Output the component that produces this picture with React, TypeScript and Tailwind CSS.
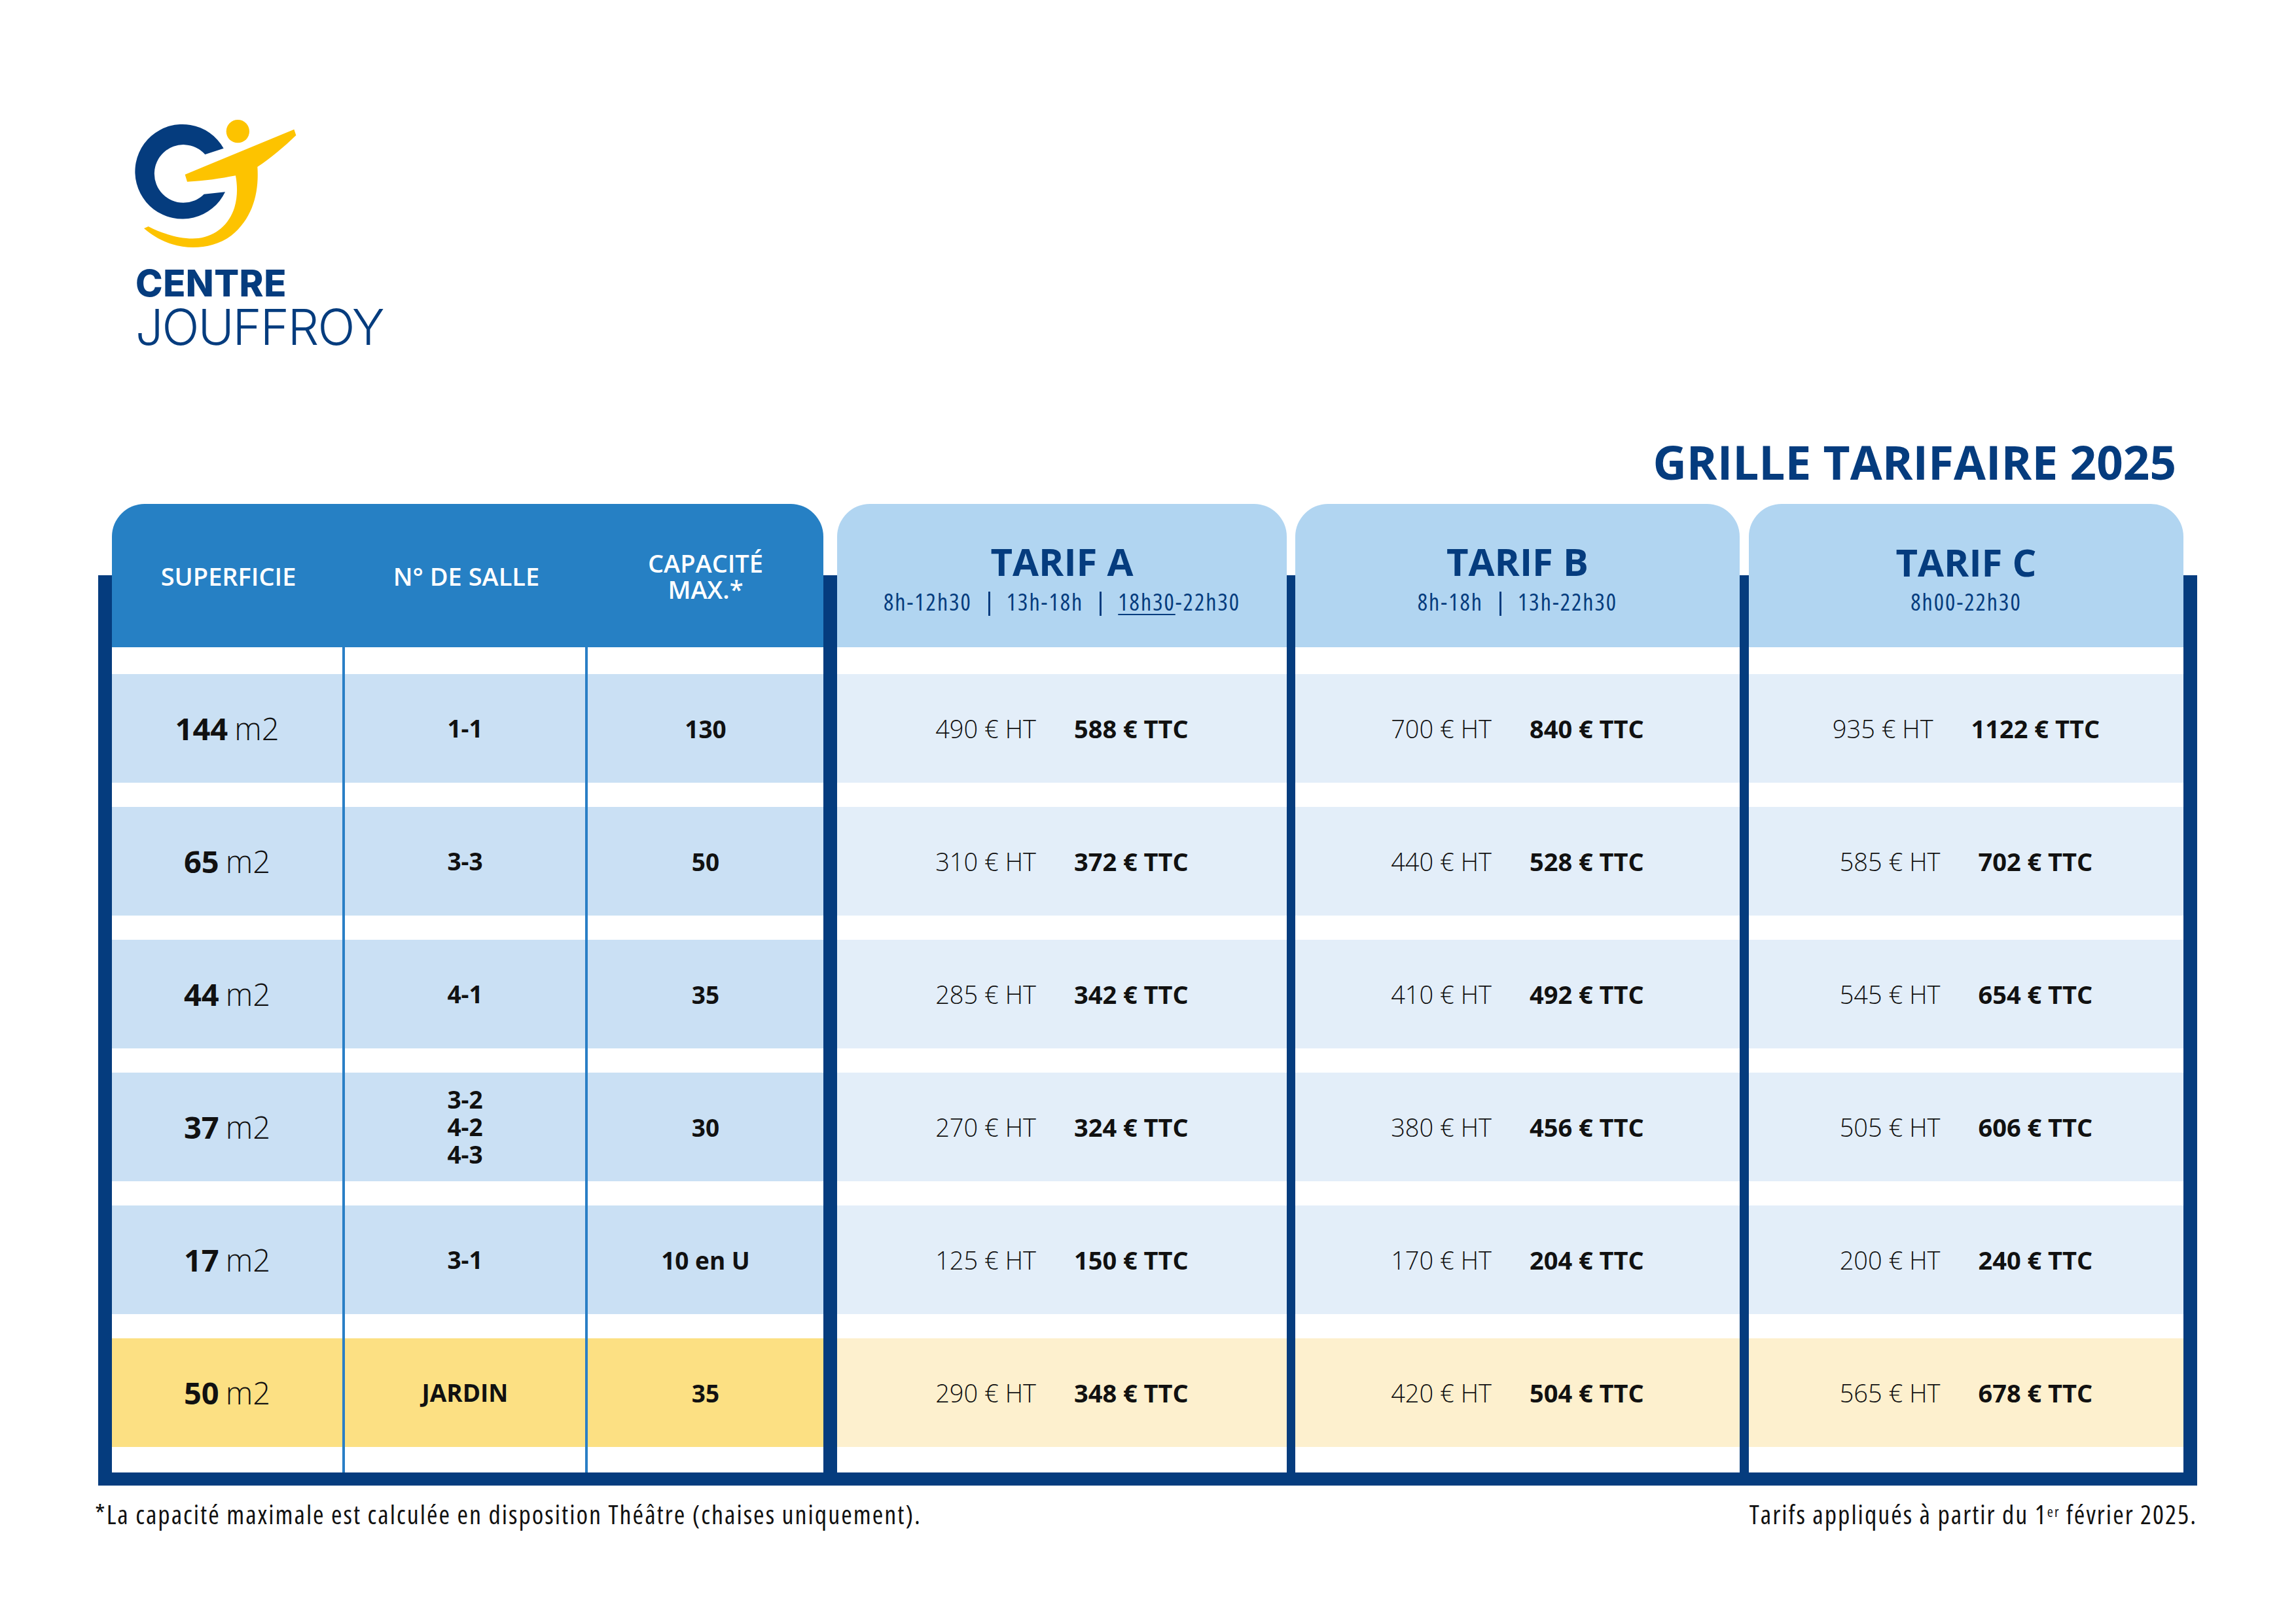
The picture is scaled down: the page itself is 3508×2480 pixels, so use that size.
import React from 'react';

type Row = {
  area: string;
  salle: string[];
  cap: string;
  a: [string, string];
  b: [string, string];
  c: [string, string];
  garden?: boolean;
};

const rows: Row[] = [
  { area: '144', salle: ['1-1'], cap: '130', a: ['490', '588'], b: ['700', '840'], c: ['935', '1122'] },
  { area: '65', salle: ['3-3'], cap: '50', a: ['310', '372'], b: ['440', '528'], c: ['585', '702'] },
  { area: '44', salle: ['4-1'], cap: '35', a: ['285', '342'], b: ['410', '492'], c: ['545', '654'] },
  { area: '37', salle: ['3-2', '4-2', '4-3'], cap: '30', a: ['270', '324'], b: ['380', '456'], c: ['505', '606'] },
  { area: '17', salle: ['3-1'], cap: '10 en U', a: ['125', '150'], b: ['170', '204'], c: ['200', '240'] },
  { area: '50', salle: ['JARDIN'], cap: '35', a: ['290', '348'], b: ['420', '504'], c: ['565', '678'], garden: true },
];

function Logo() {
  return (
    <div className="h-[400px] flex flex-col">
      <svg width="280" height="230" viewBox="0 0 840 690" className="ml-[30px]">
        {/* blue C */}
        <path
          d="M485 200 A217 217 0 1 0 492 400 L395 410 A133 133 0 1 1 400 228 Z"
          fill="#053c7e"
        />
        {/* yellow figure */}
        <circle cx="550" cy="122" r="53" fill="#fdc300" />
        <path
          d="M308 320 L808 113 L817 140 C760 195 700 245 640 285 C648 400 620 520 520 600 C440 660 330 665 250 640 C200 625 160 600 120 567 L140 558 C210 595 300 620 370 612 C450 600 510 550 535 470 C550 420 548 370 540 325 C470 338 400 350 318 353 Z"
          fill="#fdc300"
        />
      </svg>
      <div className="ml-[57px] mt-[15px] font-['Inter'] font-extrabold text-[56px] leading-none tracking-[0.5px] text-[#053c7e]">
        CENTRE
      </div>
      <div className="ml-[57px] mt-[4px] font-['Inter'] font-light text-[75px] leading-[69px] tracking-[-2px] text-[#053c7e]">
        JOUFFROY
      </div>
    </div>
  );
}

function Sep() {
  return <span className="inline-block w-[3px] h-[37px] bg-[#053c7e] mx-[25px] translate-y-[3px]" />;
}

function TarifHeader({ title, children }: { title: string; children: React.ReactNode }) {
  return (
    <div className="-mt-[109px] h-[219px] rounded-t-[50px] bg-[#b1d5f1] flex flex-col items-center justify-center pt-[8px] text-[#053c7e]">
      <div className="text-[58px] leading-none font-bold">{title}</div>
      <div className="mt-[14px] flex items-center text-[36px] leading-none font-stretch-condensed tracking-[2px]">
        {children}
      </div>
    </div>
  );
}

function PriceCol({ w, title, sub, pick }: { w: string; title: string; sub: React.ReactNode; pick: (r: Row) => [string, string] }) {
  return (
    <div className={`flex flex-col ${w}`}>
      <TarifHeader title={title}>{sub}</TarifHeader>
      <div className="flex flex-col gap-[37px] pt-[41px] pb-[39px]">
        {rows.map((r, i) => {
          const [ht, ttc] = pick(r);
          return (
            <div
              key={i}
              className={`h-[166px] flex items-center justify-center gap-[58px] text-[38px] leading-none text-[#111] ${
                r.garden ? 'bg-[#fdf0ce]' : 'bg-[#e3eef9]'
              }`}
            >
              <span className="font-light">{ht} € HT</span>
              <span className="font-bold">{ttc} € TTC</span>
            </div>
          );
        })}
      </div>
    </div>
  );
}

function LeftGroup() {
  const cell = (r: Row) => (r.garden ? 'bg-[#fce083]' : 'bg-[#cae0f4]');
  return (
    <div className="flex flex-col w-[1087px]">
      <div className="-mt-[109px] h-[219px] rounded-t-[50px] bg-[#2680c4] flex text-white font-semibold text-[38px] leading-none">
        <div className="w-[356px] flex items-center justify-center">SUPERFICIE</div>
        <div className="w-[371px] flex items-center justify-center">N° DE SALLE</div>
        <div className="flex-1 flex items-center justify-center text-center leading-[40px]">
          CAPACITÉ
          <br />
          MAX.*
        </div>
      </div>
      <div className="flex flex-1 text-[#111]">
        <div className="w-[356px] flex flex-col gap-[37px] pt-[41px] pb-[39px] border-r-4 border-[#2a7fc6]">
          {rows.map((r, i) => (
            <div key={i} className={`h-[166px] flex items-center justify-center leading-none ${cell(r)}`}>
              <span className="text-[47px] font-bold">{r.area}</span>
              <span className="text-[47px] font-light ml-[10px]">m2</span>
            </div>
          ))}
        </div>
        <div className="w-[371px] flex flex-col gap-[37px] pt-[41px] pb-[39px] border-r-4 border-[#2a7fc6]">
          {rows.map((r, i) => (
            <div key={i} className={`h-[166px] flex items-center justify-center text-center text-[37px] leading-[42px] font-bold ${cell(r)}`}>
              <div>
                {r.salle.map((s, j) => (
                  <React.Fragment key={s}>
                    {j > 0 && <br />}
                    {s}
                  </React.Fragment>
                ))}
              </div>
            </div>
          ))}
        </div>
        <div className="flex-1 flex flex-col gap-[37px] pt-[41px] pb-[39px]">
          {rows.map((r, i) => (
            <div key={i} className={`h-[166px] flex items-center justify-center text-[37px] leading-none font-bold ${cell(r)}`}>
              {r.cap}
            </div>
          ))}
        </div>
      </div>
    </div>
  );
}

export default function App() {
  return (
    <div className="w-[3508px] h-[2480px] bg-white pt-[160px] pl-[150px] font-['Open_Sans',sans-serif]">
      <Logo />

      {/* title */}
      <div className="w-[3207px] h-[319px] pt-[110px] flex justify-end pr-[32px]">
        <h1 className="text-[71px] leading-none font-bold text-[#053c7e]">GRILLE TARIFAIRE 2025</h1>
      </div>

      {/* table frame */}
      <div className="w-[3207px] flex border-x-[21px] border-b-[20px] border-[#053c7e]">
        <LeftGroup />
        <div className="w-[21px] bg-[#053c7e]" />
        <PriceCol
          w="w-[687px]"
          title="TARIF A"
          pick={(r) => r.a}
          sub={
            <>
              <span>8h-12h30</span>
              <Sep />
              <span>13h-18h</span>
              <Sep />
              <span>
                <span className="underline decoration-2 underline-offset-[5px]">18h30</span>-22h30
              </span>
            </>
          }
        />
        <div className="w-[13px] bg-[#053c7e]" />
        <PriceCol
          w="w-[679px]"
          title="TARIF B"
          pick={(r) => r.b}
          sub={
            <>
              <span>8h-18h</span>
              <Sep />
              <span>13h-22h30</span>
            </>
          }
        />
        <div className="w-[14px] bg-[#053c7e]" />
        <PriceCol w="w-[664px]" title="TARIF C" pick={(r) => r.c} sub={<span>8h00-22h30</span>} />
      </div>

      {/* footer */}
      <div className="w-[3212px] -ml-[5px] mt-[24px] flex justify-between text-[40px] leading-none font-stretch-condensed tracking-[2px] text-[#111]">
        <span>*La capacité maximale est calculée en disposition Théâtre (chaises uniquement).</span>
        <span>
          Tarifs appliqués à partir du 1<sup className="text-[22px]">er</sup> février 2025.
        </span>
      </div>
    </div>
  );
}
